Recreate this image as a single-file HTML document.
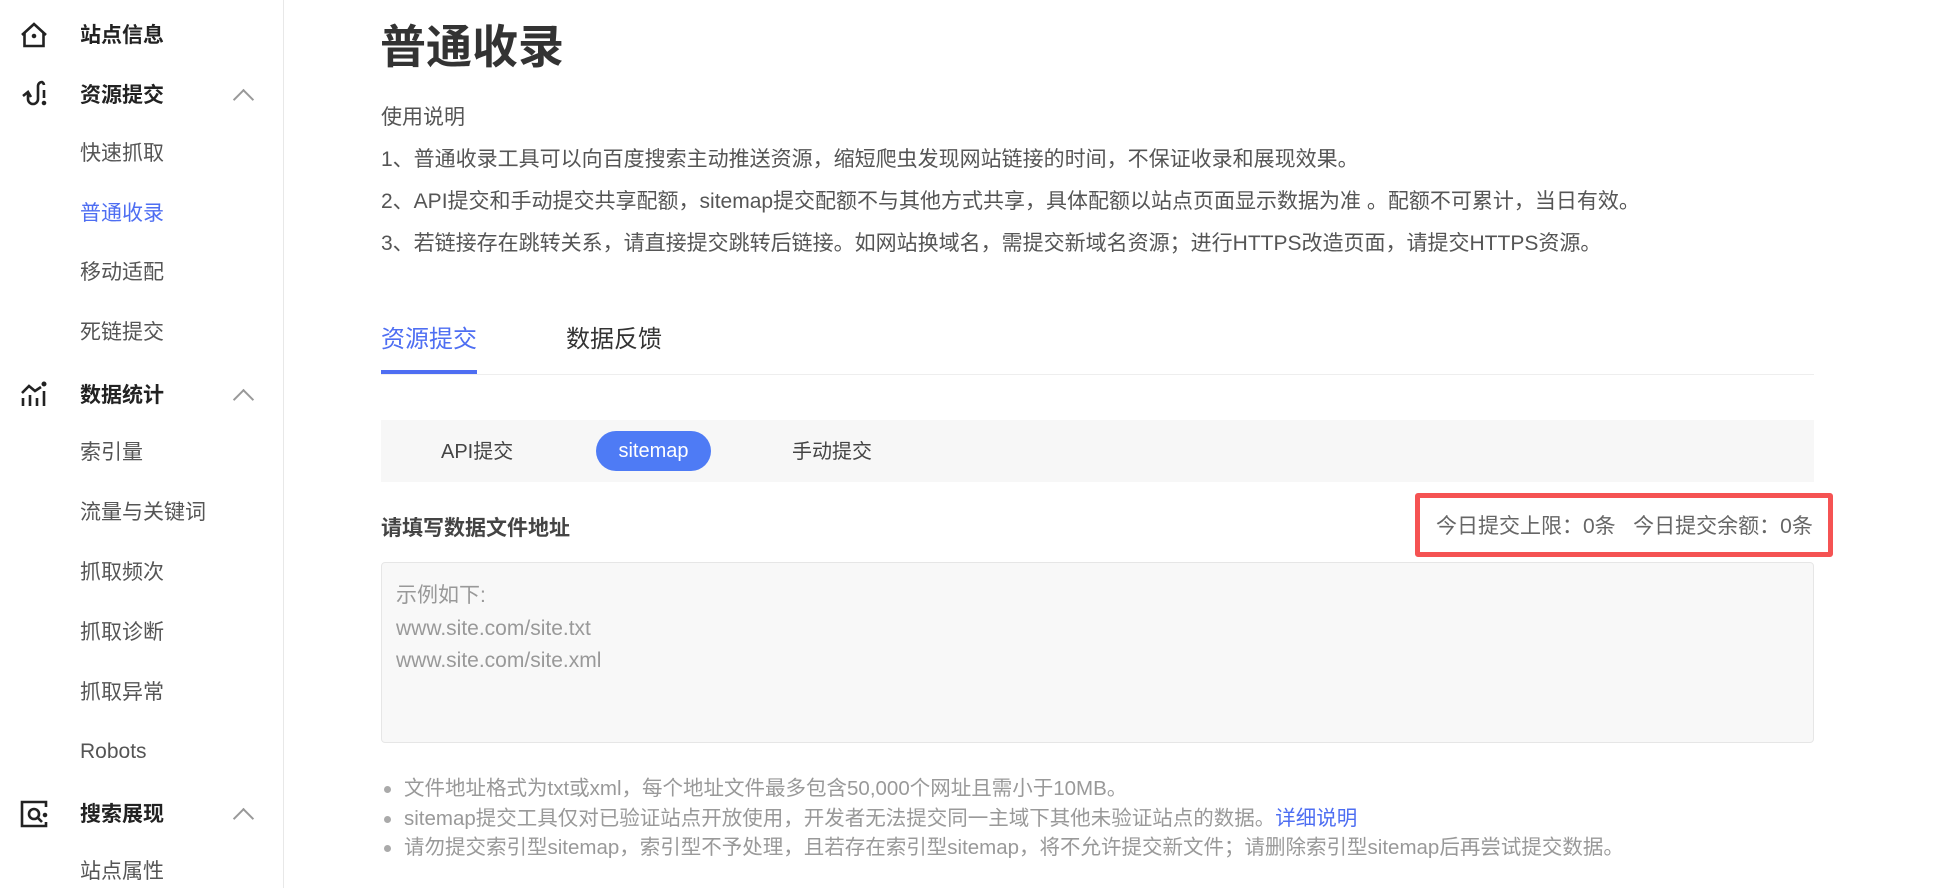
<!DOCTYPE html>
<html><head><meta charset="utf-8"><style>
*{margin:0;padding:0;box-sizing:border-box}
body{width:1938px;height:888px;overflow:hidden;background:#fff;font-family:"Liberation Sans","Noto Sans CJK SC",sans-serif;position:relative;color:#333}
.a{position:absolute;white-space:nowrap}
.side{position:absolute;left:0;top:0;width:284px;height:888px;border-right:1px solid #e8e8e8}
.g{font-size:21px;font-weight:bold;color:#222;left:80px;line-height:24px}
.s{font-size:21px;color:#555;left:80px;line-height:24px}
.chev{position:absolute;left:236px;width:15px;height:15px;border-left:2.5px solid #999;border-top:2.5px solid #999;transform:rotate(45deg)}
.ic{position:absolute;left:20px}
.p{font-size:21px;color:#555;left:381px;line-height:24px}
.b{font-size:20.5px;color:#999;left:404px;line-height:24px}
.dot{position:absolute;left:384px;width:7px;height:7px;border-radius:50%;background:#aaa}
</style></head><body>
<div class="side">
<svg class="ic" style="top:22px" width="28" height="26" viewBox="0 0 28 26" fill="none" stroke="#222" stroke-width="2.6"><path d="M2 13L14 2L26 13"/><path d="M4.5 11V24H23.5V11"/><circle cx="14" cy="14" r="1" fill="#222"/></svg>
<div class="a g" style="top:24px">站点信息</div>
<svg class="ic" style="top:79px" width="28" height="28" viewBox="0 0 28 28" fill="none" stroke="#222" stroke-width="2.6"><path d="M3 17L8 13L11 18"/><path d="M8 14V20A5 5 0 0 0 18 20V7A4 4 0 0 1 22 3A4 4 0 0 1 24 6"/><path d="M24 11V19"/><circle cx="24" cy="24" r="1" fill="#222"/></svg>
<div class="a g" style="top:84px">资源提交</div><div class="chev" style="top:92px"></div>
<div class="a s" style="top:142px">快速抓取</div>
<div class="a s" style="top:202px;color:#4e6ef2">普通收录</div>
<div class="a s" style="top:261px">移动适配</div>
<div class="a s" style="top:321px">死链提交</div>
<svg class="ic" style="top:380px" width="28" height="28" viewBox="0 0 28 28" fill="none" stroke="#222" stroke-width="2.6"><path d="M2 13L9 6L15 11L21 7"/><path d="M3 18V26M10 15V26M17 18V26M24 11V26"/><circle cx="24" cy="4" r="1.2" fill="#222"/></svg>
<div class="a g" style="top:384px">数据统计</div><div class="chev" style="top:392px"></div>
<div class="a s" style="top:441px">索引量</div>
<div class="a s" style="top:501px">流量与关键词</div>
<div class="a s" style="top:561px">抓取频次</div>
<div class="a s" style="top:621px">抓取诊断</div>
<div class="a s" style="top:681px">抓取异常</div>
<div class="a s" style="top:740px">Robots</div>
<svg class="ic" style="top:800px" width="28" height="28" viewBox="0 0 28 28" fill="none" stroke="#222" stroke-width="2.6"><path d="M26 7V2H2V26H26V22"/><circle cx="14" cy="14" r="5"/><path d="M18 18L22 22"/><circle cx="25" cy="15" r="1" fill="#222"/></svg>
<div class="a g" style="top:803px">搜索展现</div><div class="chev" style="top:811px"></div>
<div class="a s" style="top:860px">站点属性</div>
</div>

<div class="a" style="left:380px;top:19px;font-size:46px;font-weight:bold;color:#333;line-height:56px">普通收录</div>
<div class="a p" style="top:106px">使用说明</div>
<div class="a p" style="top:148px">1、普通收录工具可以向百度搜索主动推送资源，缩短爬虫发现网站链接的时间，不保证收录和展现效果。</div>
<div class="a p" style="top:190px">2、API提交和手动提交共享配额，sitemap提交配额不与其他方式共享，具体配额以站点页面显示数据为准 。配额不可累计，当日有效。</div>
<div class="a p" style="top:232px">3、若链接存在跳转关系，请直接提交跳转后链接。如网站换域名，需提交新域名资源；进行HTTPS改造页面，请提交HTTPS资源。</div>

<div class="a" style="left:381px;top:325px;font-size:24px;color:#4e6ef2;line-height:30px">资源提交</div>
<div class="a" style="left:566px;top:325px;font-size:24px;color:#333;line-height:30px">数据反馈</div>
<div class="a" style="left:381px;top:374px;width:1433px;height:1px;background:#eee"></div>
<div class="a" style="left:381px;top:370px;width:96px;height:4px;background:#4e6ef2"></div>

<div class="a" style="left:381px;top:420px;width:1433px;height:62px;background:#f7f7f7"></div>
<div class="a" style="left:441px;top:440px;font-size:20px;color:#444;line-height:24px">API提交</div>
<div class="a" style="left:596px;top:431px;width:115px;height:40px;border-radius:20px;background:#4e7bf5;color:#fff;font-size:20px;line-height:40px;text-align:center">sitemap</div>
<div class="a" style="left:792px;top:440px;font-size:20px;color:#444;line-height:24px">手动提交</div>

<div class="a" style="left:381px;top:517px;font-size:21px;font-weight:bold;color:#444;line-height:24px">请填写数据文件地址</div>
<div class="a" style="left:1415px;top:493px;width:418px;height:64px;border:5px solid #f55353;border-radius:3px"></div>
<div class="a" style="left:1436px;top:515px;font-size:21px;color:#666;line-height:24px">今日提交上限：0条&nbsp;&nbsp;&nbsp;今日提交余额：0条</div>

<div class="a" style="left:381px;top:562px;width:1433px;height:181px;background:#f8f8f8;border:1px solid #e6e6e6;border-radius:4px"></div>
<div class="a" style="left:396px;top:580px;font-size:21px;color:#999;line-height:32.5px;white-space:pre">示例如下:
www.site.com/site.txt
www.site.com/site.xml</div>

<div class="dot" style="top:786px"></div><div class="a b" style="top:777px">文件地址格式为txt或xml，每个地址文件最多包含50,000个网址且需小于10MB。</div>
<div class="dot" style="top:816px"></div><div class="a b" style="top:807px">sitemap提交工具仅对已验证站点开放使用，开发者无法提交同一主域下其他未验证站点的数据。<span style="color:#4e6ef2">详细说明</span></div>
<div class="dot" style="top:845px"></div><div class="a b" style="top:836px">请勿提交索引型sitemap，索引型不予处理，且若存在索引型sitemap，将不允许提交新文件；请删除索引型sitemap后再尝试提交数据。</div>
</body></html>
